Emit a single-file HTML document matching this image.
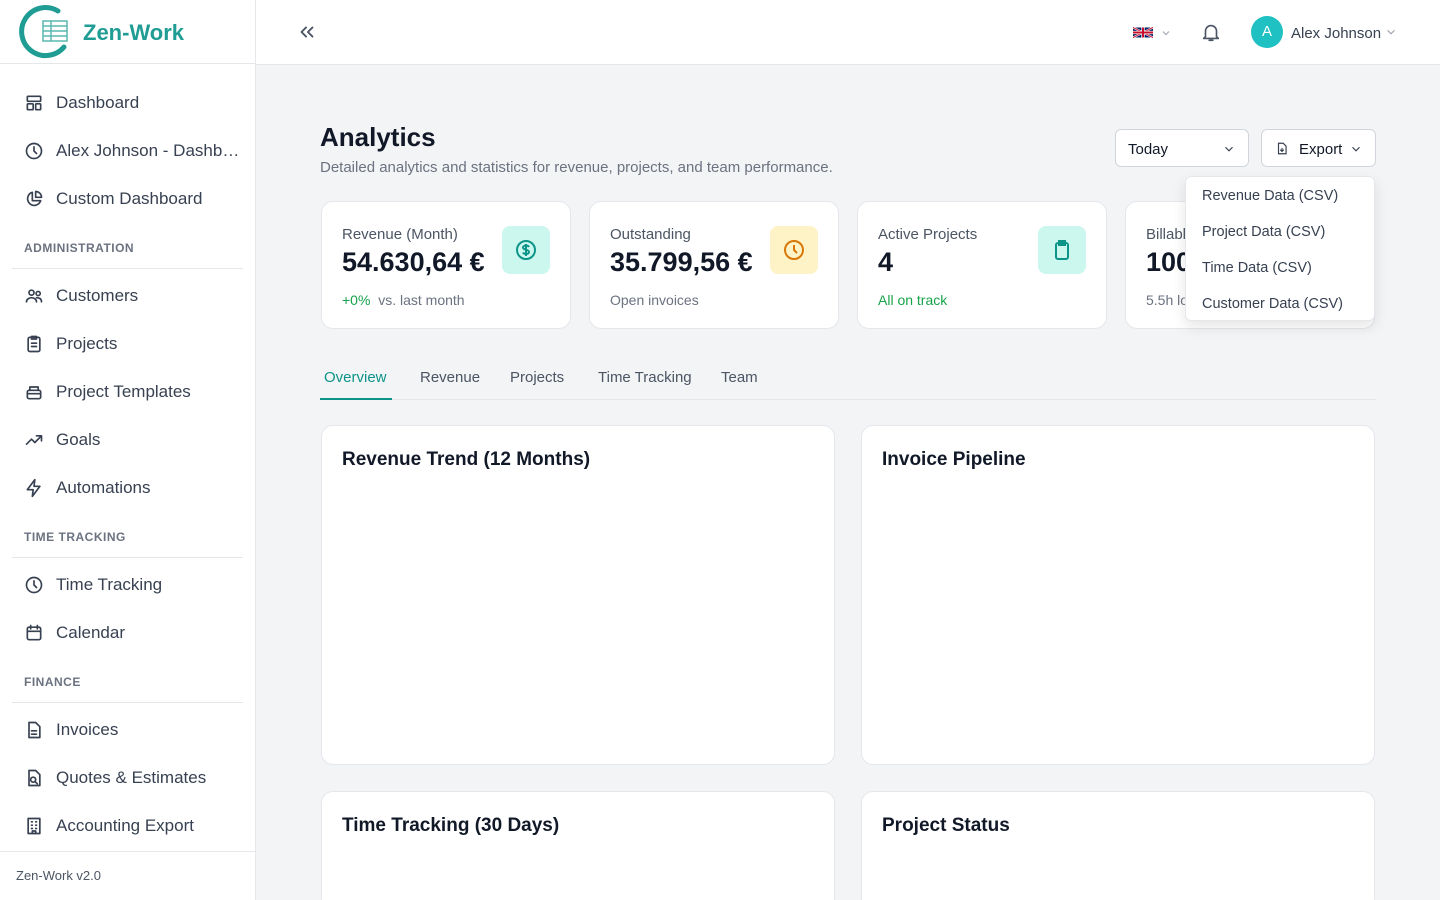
<!DOCTYPE html>
<html style="height:900px;overflow:hidden"><head><meta charset="utf-8"><style>
*{box-sizing:border-box;margin:0;padding:0}
body{width:1440px;height:900px;overflow:hidden;font-family:"Liberation Sans",sans-serif;background:#f3f4f6;color:#111827;position:relative}
.abs{position:absolute}
.side{left:0;top:0;width:256px;height:900px;background:#fff;border-right:1px solid #e5e7eb}
.nav{position:absolute;left:24px;font-size:17px;color:#374151;display:flex;align-items:center;height:24px;white-space:nowrap}
.nav svg{width:20px;height:20px;margin-right:12px;stroke:#374151;fill:none;stroke-width:2;stroke-linecap:round;stroke-linejoin:round}
.sec{position:absolute;left:24px;font-size:12px;color:#6b7280;letter-spacing:.5px;font-weight:bold}
.hr{position:absolute;left:12px;width:231px;height:1px;background:#e5e7eb}
.card{position:absolute;background:#fff;border:1px solid #e5e7eb;border-radius:12px}
.lbl{position:absolute;left:20px;top:24px;font-size:15px;color:#4b5563}
.val{position:absolute;left:20px;top:45px;font-size:27px;font-weight:bold;color:#111827}
.sub{position:absolute;left:20px;top:90px;font-size:14px;color:#6b7280}
.ib{position:absolute;right:20px;top:24px;width:48px;height:48px;border-radius:8px;display:flex;align-items:center;justify-content:center}
.tab{position:absolute;top:368px;font-size:15px;color:#4b5563}
.ct{position:absolute;left:20px;top:23px;font-size:19px;font-weight:bold;color:#111827}
.dd div{height:36px;line-height:36px;padding-left:16px;font-size:14.5px;color:#374151}
</style></head><body>
<div class="abs side">
 <div class="abs" style="left:0;top:63px;width:256px;height:1px;background:#e5e7eb"></div>
 <svg class="abs" style="left:18px;top:5px" width="54" height="54" viewBox="0 0 54 54"><path d="M40 6 A24 24 0 1 0 46 42" stroke="#1f9c93" stroke-width="5" fill="none" stroke-linecap="round"/><g stroke="#5cb8b0" stroke-width="1.5" fill="none"><rect x="25" y="16" width="24" height="20"/><line x1="25" y1="21" x2="49" y2="21"/><line x1="25" y1="26" x2="49" y2="26"/><line x1="25" y1="31" x2="49" y2="31"/><line x1="33" y1="16" x2="33" y2="36"/></g></svg>
 <div class="abs" style="left:83px;top:20px;font-size:22px;font-weight:bold;color:#1f9c93">Zen-Work</div>
 <div class="nav" style="top:91px"><svg viewBox="0 0 24 24"><rect x="4" y="4" width="16" height="6" rx="1"/><rect x="4" y="13" width="7" height="7" rx="1"/><rect x="14" y="13" width="6" height="7" rx="1"/></svg>Dashboard</div>
 <div class="nav" style="top:139px"><svg viewBox="0 0 24 24"><circle cx="12" cy="12" r="9"/><path d="M12 7v5l3 3"/></svg>Alex Johnson - Dashb…</div>
 <div class="nav" style="top:187px"><svg viewBox="0 0 24 24"><path d="M10 4a8 8 0 1 0 10 10h-10z"/><path d="M14 3v7h7a7 7 0 0 0-7-7z"/></svg>Custom Dashboard</div>
 <div class="sec" style="top:241px">ADMINISTRATION</div><div class="hr" style="top:268px"></div>
 <div class="nav" style="top:284px"><svg viewBox="0 0 24 24"><circle cx="9" cy="8" r="3"/><circle cx="17" cy="9" r="2.5"/><path d="M3 19c0-3 3-5 6-5s6 2 6 5M15 14c3 0 6 1 6 5"/></svg>Customers</div>
 <div class="nav" style="top:332px"><svg viewBox="0 0 24 24"><rect x="5" y="4" width="14" height="17" rx="2"/><path d="M9 3h6v3H9zM9 11h6M9 15h6"/></svg>Projects</div>
 <div class="nav" style="top:380px"><svg viewBox="0 0 24 24"><rect x="4" y="10" width="16" height="10" rx="2"/><path d="M7 10V6h10v4M4 14h16"/></svg>Project Templates</div>
 <div class="nav" style="top:428px"><svg viewBox="0 0 24 24"><path d="M3 17l6-6 4 4 8-8M15 7h6v6"/></svg>Goals</div>
 <div class="nav" style="top:476px"><svg viewBox="0 0 24 24"><path d="M13 2L4 14h7l-1 8 9-12h-7z"/></svg>Automations</div>
 <div class="sec" style="top:530px">TIME TRACKING</div><div class="hr" style="top:557px"></div>
 <div class="nav" style="top:573px"><svg viewBox="0 0 24 24"><circle cx="12" cy="12" r="9"/><path d="M12 7v5l3 3"/></svg>Time Tracking</div>
 <div class="nav" style="top:621px"><svg viewBox="0 0 24 24"><rect x="4" y="5" width="16" height="15" rx="2"/><path d="M8 3v4M16 3v4M4 10h16"/></svg>Calendar</div>
 <div class="sec" style="top:675px">FINANCE</div><div class="hr" style="top:702px"></div>
 <div class="nav" style="top:718px"><svg viewBox="0 0 24 24"><path d="M6 3h8l5 5v13H6z"/><path d="M9 13h6M9 17h6"/></svg>Invoices</div>
 <div class="nav" style="top:766px"><svg viewBox="0 0 24 24"><path d="M6 3h8l5 5v13H6z"/><circle cx="11" cy="14" r="3"/><path d="M13 16l3 3"/></svg>Quotes &amp; Estimates</div>
 <div class="nav" style="top:814px"><svg viewBox="0 0 24 24"><rect x="5" y="3" width="14" height="18"/><path d="M9 7h1M14 7h1M9 11h1M14 11h1M9 15h1M14 15h1M10 21v-3h4v3"/></svg>Accounting Export</div>
 <div class="abs" style="left:0;top:851px;width:256px;height:1px;background:#e5e7eb"></div>
 <div class="abs" style="left:16px;top:868px;font-size:13px;color:#4b5563">Zen-Work v2.0</div>
</div>
<div class="abs" style="left:256px;top:0;width:1184px;height:65px;background:#fff;border-bottom:1px solid #e5e7eb"></div>
<svg class="abs" style="left:296px;top:21px" width="22" height="22" viewBox="0 0 24 24" fill="none" stroke="#4b5563" stroke-width="2" stroke-linecap="round" stroke-linejoin="round"><path d="M11 17l-5-5 5-5M18 17l-5-5 5-5"/></svg>
<svg class="abs" style="left:1133px;top:27px" width="20" height="11" viewBox="0 0 60 30"><rect width="60" height="30" fill="#012169"/><path d="M0 0L60 30M60 0L0 30" stroke="#fff" stroke-width="6"/><path d="M0 0L60 30M60 0L0 30" stroke="#C8102E" stroke-width="3"/><path d="M30 0v30M0 15h60" stroke="#fff" stroke-width="10"/><path d="M30 0v30M0 15h60" stroke="#C8102E" stroke-width="6"/></svg>
<svg class="abs" style="left:1160px;top:27px" width="12" height="12" viewBox="0 0 24 24" fill="none" stroke="#9ca3af" stroke-width="2"><path d="M6 9l6 6 6-6"/></svg>
<svg class="abs" style="left:1200px;top:21px" width="22" height="22" viewBox="0 0 24 24" fill="none" stroke="#4b5563" stroke-width="1.8" stroke-linecap="round" stroke-linejoin="round"><path d="M6 17V11a6 6 0 0 1 12 0v6l2 2H4zM10 21h4"/></svg>
<div class="abs" style="left:1251px;top:16px;width:32px;height:32px;border-radius:50%;background:#1fc1c3;color:#fff;font-size:15px;text-align:center;line-height:32px">A</div>
<div class="abs" style="left:1291px;top:25px;font-size:15px;color:#374151">Alex Johnson</div>
<svg class="abs" style="left:1384px;top:25px" width="14" height="14" viewBox="0 0 24 24" fill="none" stroke="#9ca3af" stroke-width="2"><path d="M6 9l6 6 6-6"/></svg>

<div class="abs" style="left:320px;top:122px;font-size:26px;font-weight:bold">Analytics</div>
<div class="abs" style="left:320px;top:159px;font-size:15px;color:#6b7280">Detailed analytics and statistics for revenue, projects, and team performance.</div>
<div class="abs" style="left:1115px;top:129px;width:134px;height:38px;background:#fff;border:1px solid #d1d5db;border-radius:6px;font-size:15px;padding:11px 12px;color:#111827">Today<svg style="position:absolute;right:12px;top:12px" width="14" height="14" viewBox="0 0 24 24" fill="none" stroke="#374151" stroke-width="2"><path d="M6 9l6 6 6-6"/></svg></div>
<div class="abs" style="left:1261px;top:129px;width:115px;height:38px;background:#fff;border:1px solid #d1d5db;border-radius:6px;font-size:15px;padding:11px 0 0 37px;color:#111827"><svg style="position:absolute;left:13px;top:11px" width="14" height="15" viewBox="0 0 24 24" fill="none" stroke="#374151" stroke-width="2"><path d="M6 3h8l5 5v13H6z"/><path d="M12 11v6M9 14l3 3 3-3"/></svg>Export<svg style="position:absolute;right:12px;top:12px" width="14" height="14" viewBox="0 0 24 24" fill="none" stroke="#374151" stroke-width="2"><path d="M6 9l6 6 6-6"/></svg></div>

<div class="card" style="left:321px;top:201px;width:250px;height:128px"><div class="lbl">Revenue (Month)</div><div class="val">54.630,64 €</div><div class="sub"><span style="color:#16a34a">+0%</span>&nbsp; vs. last month</div><div class="ib" style="background:#ccf7ef"><svg width="24" height="24" viewBox="0 0 24 24" fill="none" stroke="#0d9488" stroke-width="2"><circle cx="12" cy="12" r="9"/><path d="M15 9c-.5-1-1.5-1.5-3-1.5s-3 .8-3 2 1.5 1.8 3 2.2 3 .9 3 2.3-1.5 2-3 2-2.5-.5-3-1.5M12 6v12"/></svg></div></div>
<div class="card" style="left:589px;top:201px;width:250px;height:128px"><div class="lbl">Outstanding</div><div class="val">35.799,56 €</div><div class="sub">Open invoices</div><div class="ib" style="background:#fef3c7"><svg width="24" height="24" viewBox="0 0 24 24" fill="none" stroke="#d97706" stroke-width="2"><circle cx="12" cy="12" r="9"/><path d="M12 7v5l3 3"/></svg></div></div>
<div class="card" style="left:857px;top:201px;width:250px;height:128px"><div class="lbl">Active Projects</div><div class="val">4</div><div class="sub" style="color:#16a34a">All on track</div><div class="ib" style="background:#ccf7ef"><svg width="24" height="24" viewBox="0 0 24 24" fill="none" stroke="#0d9488" stroke-width="2"><rect x="6" y="5" width="12" height="16" rx="2"/><path d="M9 3h6v4H9z"/></svg></div></div>
<div class="card" style="left:1125px;top:201px;width:250px;height:128px;overflow:hidden"><div class="lbl">Billable</div><div class="val">100</div><div class="sub">5.5h logged</div></div>
<div class="dd abs" style="left:1185px;top:176px;width:190px;height:145px;background:#fff;border:1px solid #e5e7eb;border-radius:6px;box-shadow:0 6px 14px rgba(0,0,0,.1);padding-top:1px"><div>Revenue Data (CSV)</div><div>Project Data (CSV)</div><div>Time Data (CSV)</div><div>Customer Data (CSV)</div></div>

<div class="tab" style="left:324px;top:369px;color:#0d9488">Overview</div>
<div class="tab" style="left:420px;top:369px">Revenue</div>
<div class="tab" style="left:510px;top:369px">Projects</div>
<div class="tab" style="left:598px;top:369px">Time Tracking</div>
<div class="tab" style="left:721px;top:369px">Team</div>
<div class="abs" style="left:320px;top:399px;width:1056px;height:1px;background:#e5e7eb"></div>
<div class="abs" style="left:320px;top:398px;width:72px;height:2px;background:#0d9488"></div>

<div class="card" style="left:321px;top:425px;width:514px;height:340px"><div class="ct">Revenue Trend (12 Months)</div></div>
<div class="card" style="left:861px;top:425px;width:514px;height:340px"><div class="ct">Invoice Pipeline</div></div>
<div class="card" style="left:321px;top:791px;width:514px;height:120px"><div class="ct">Time Tracking (30 Days)</div></div>
<div class="card" style="left:861px;top:791px;width:514px;height:120px"><div class="ct">Project Status</div></div>
</body></html>
